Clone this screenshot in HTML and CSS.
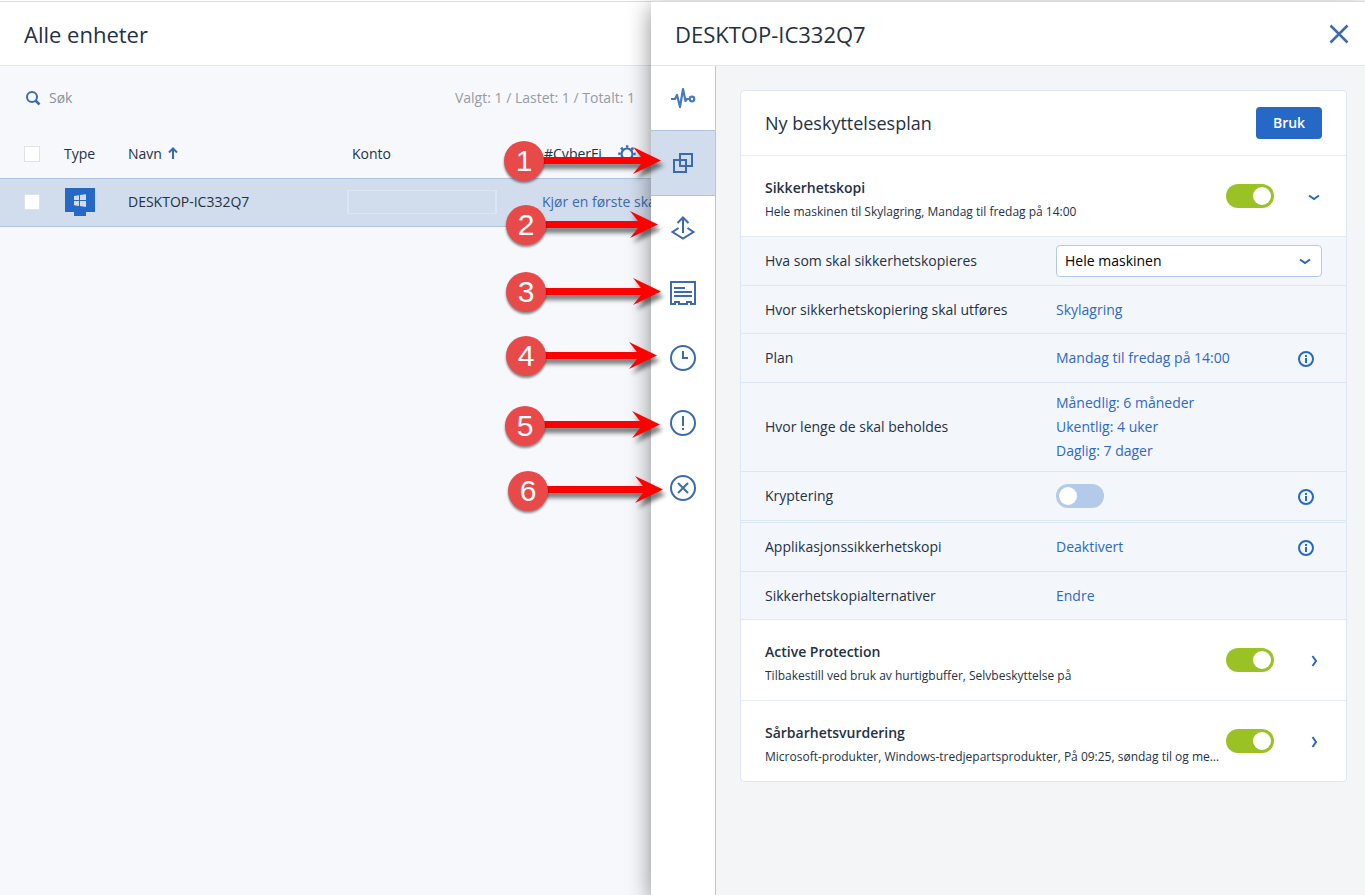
FILE: index.html
```html
<!DOCTYPE html>
<html lang="nb">
<head>
    <meta charset="UTF-8">
    <meta name="viewport" content="width=device-width, initial-scale=1.0">
    <title>Alle enheter</title>
    <link rel="stylesheet" href="styles.css">
</head>
<body>
    <div class="page">
        <main class="devices">
            <header class="page-header">
                <h1>Alle enheter</h1>
            </header>

            <div class="toolbar">
                <label class="search">
                    <svg width="16" height="16" viewBox="0 0 16 16" fill="none" stroke="#3c6aaf" stroke-width="2">
                        <circle cx="7" cy="7" r="5"/>
                        <path d="M10.500 10.500L14.500 14.500" stroke-width="2.500"/>
                    </svg>
                    <input type="text" placeholder="Søk" aria-label="Søk">
                </label>
                <span class="counts">Valgt: 1 / Lastet: 1 / Totalt: 1</span>
            </div>

            <table class="device-table">
                <thead>
                    <tr>
                        <th class="col-check"><input type="checkbox" class="check" aria-label="Velg alle"></th>
                        <th class="col-type">Type</th>
                        <th class="col-name">Navn
                            <svg class="sort" width="10" height="12" viewBox="0 0 10 12" fill="none" stroke="#3c6aaf" stroke-width="2">
                                <path d="M5 12V2M1 5.500L5 1.500L9 5.500"/>
                            </svg>
                        </th>
                        <th class="col-account">Konto</th>
                        <th>
                            <div class="last-head">
                                <span>#CyberFi</span>
                                <button class="icon-button" aria-label="Kolonner">
                                    <svg width="18" height="18" viewBox="0 0 18 18" fill="none" stroke="#3c6aaf">
                                        <circle cx="9" cy="9" r="5.500" stroke-width="2.200"/>
                                        <circle cx="9" cy="9" r="7.500" stroke-width="2.400" stroke-dasharray="2.600 3.290" stroke-dashoffset="1.300" transform="rotate(-90 9 9)"/>
                                    </svg>
                                </button>
                            </div>
                        </th>
                    </tr>
                </thead>
                <tbody>
                    <tr>
                        <td class="col-check"><input type="checkbox" class="check" aria-label="Velg DESKTOP-IC332Q7"></td>
                        <td>
                            <svg class="monitor" width="32" height="28" viewBox="0 0 32 28">
                                <path d="M1 0H31V24H22V28H10V24H1Z" fill="#2668c5"/>
                                <path d="M10 8L15 7.300V12H10ZM16 7.100L22 6.200V12H16ZM10 13H15V17.900L10 17.200ZM16 13H22V19L16 18.100Z" fill="#d1dcec"/>
                            </svg>
                        </td>
                        <td>DESKTOP-IC332Q7</td>
                        <td class="account-cell"><div class="account"></div></td>
                        <td><a href="#">Kjør en første skanning</a></td>
                    </tr>
                </tbody>
            </table>
        </main>

        <aside class="panel">
            <header class="page-header">
                <h2>DESKTOP-IC332Q7</h2>
                <button class="icon-button" aria-label="Lukk">
                    <svg width="20" height="20" viewBox="0 0 20 20" fill="none" stroke="#3c6aaf" stroke-width="2.500">
                        <path d="M1.500 1.500L18.500 18.500M18.500 1.500L1.500 18.500"/>
                    </svg>
                </button>
            </header>

            <div class="panel-body">
                <nav class="rail">
                    <button class="rail-item" aria-label="Status">
                        <svg width="26" height="26" viewBox="0 0 26 26" fill="none" stroke="#4678bd" stroke-width="2.200" stroke-linejoin="round">
                            <path d="M1 14H5L7 10L10 22L13 4L15.500 16L17 14H20"/>
                            <circle cx="22" cy="14" r="2.300"/>
                        </svg>
                    </button>
                    <button class="rail-item active" aria-label="Beskyttelse">
                        <svg width="26" height="26" viewBox="0 0 26 26" fill="none" stroke="#3c6aaf" stroke-width="2">
                            <path d="M10 4H22V16H10ZM4 10H16V22H4Z"/>
                        </svg>
                    </button>
                    <button class="rail-item" aria-label="Gjenoppretting">
                        <svg width="26" height="26" viewBox="0 0 26 26" fill="none" stroke="#3c6aaf" stroke-width="2">
                            <path d="M13 18V2.500M7.500 8L13 2.500L18.500 8M8.500 13L2.500 17L13 23.500L23.500 17L17.500 13"/>
                        </svg>
                    </button>
                    <button class="rail-item" aria-label="Detaljer">
                        <svg width="26" height="26" viewBox="0 0 26 26" fill="none" stroke="#3c6aaf" stroke-width="2">
                            <path d="M1 2H25V24H21V22H17V24H9V22H5V24H1ZM4 8H15M4 12H22M4 16H22"/>
                        </svg>
                    </button>
                    <button class="rail-item" aria-label="Aktiviteter">
                        <svg width="26" height="26" viewBox="0 0 26 26" fill="none" stroke="#3c6aaf" stroke-width="2">
                            <circle cx="13" cy="13" r="12"/>
                            <path d="M13 6V13H18"/>
                        </svg>
                    </button>
                    <button class="rail-item" aria-label="Varsler">
                        <svg width="26" height="26" viewBox="0 0 26 26" fill="none" stroke="#3c6aaf" stroke-width="2">
                            <circle cx="13" cy="13" r="12"/>
                            <path d="M13 6V16M13 18V20"/>
                        </svg>
                    </button>
                    <button class="rail-item" aria-label="Slett">
                        <svg width="26" height="26" viewBox="0 0 26 26" fill="none" stroke="#3c6aaf" stroke-width="2">
                            <circle cx="13" cy="13" r="12"/>
                            <path d="M8 8L18 18M18 8L8 18"/>
                        </svg>
                    </button>
                </nav>

                <div class="content">
                    <section class="card">
                        <div class="card-header">
                            <h3>Ny beskyttelsesplan</h3>
                            <button class="apply">Bruk</button>
                        </div>

                        <div class="module">
                            <div class="module-text">
                                <h4>Sikkerhetskopi</h4>
                                <p>Hele maskinen til Skylagring, Mandag til fredag på 14:00</p>
                            </div>
                            <input type="checkbox" class="toggle" aria-label="Sikkerhetskopi" checked>
                            <button class="icon-button expand" aria-label="Skjul">
                                <svg width="16" height="16" viewBox="0 0 16 16" fill="none" stroke="#2668c5" stroke-width="2">
                                    <path d="M3 7.500L8 11L13 7.500"/>
                                </svg>
                            </button>
                        </div>

                        <div class="settings">
                            <div class="row tall">
                                <label for="what">Hva som skal sikkerhetskopieres</label>
                                <div class="select">
                                    <select id="what">
                                        <option>Hele maskinen</option>
                                    </select>
                                    <svg width="16" height="16" viewBox="0 0 16 16" fill="none" stroke="#2668c5" stroke-width="2">
                                        <path d="M3 6.500L8 10L13 6.500"/>
                                    </svg>
                                </div>
                            </div>
                            <div class="row">
                                <span>Hvor sikkerhetskopiering skal utføres</span>
                                <div class="value"><a href="#">Skylagring</a></div>
                            </div>
                            <div class="row tall">
                                <span>Plan</span>
                                <div class="value">
                                    <a href="#">Mandag til fredag på 14:00</a>
                                    <button class="icon-button info" aria-label="Informasjon om plan">
                                        <svg width="16" height="16" viewBox="0 0 16 16" fill="none" stroke="#2668c5" stroke-width="2">
                                            <circle cx="8" cy="8" r="7"/>
                                            <path d="M8 4V6M8 7V12"/>
                                        </svg>
                                    </button>
                                </div>
                            </div>
                            <div class="row">
                                <span>Hvor lenge de skal beholdes</span>
                                <div class="value">
                                    <a href="#">Månedlig: 6 måneder<br>Ukentlig: 4 uker<br>Daglig: 7 dager</a>
                                </div>
                            </div>
                            <div class="row tall">
                                <label for="encryption">Kryptering</label>
                                <div class="value">
                                    <input type="checkbox" class="toggle" id="encryption">
                                    <button class="icon-button info" aria-label="Informasjon om kryptering">
                                        <svg width="16" height="16" viewBox="0 0 16 16" fill="none" stroke="#2668c5" stroke-width="2">
                                            <circle cx="8" cy="8" r="7"/>
                                            <path d="M8 4V6M8 7V12"/>
                                        </svg>
                                    </button>
                                </div>
                            </div>
                            <div class="row tall group-start">
                                <span>Applikasjonssikkerhetskopi</span>
                                <div class="value">
                                    <a href="#">Deaktivert</a>
                                    <button class="icon-button info" aria-label="Informasjon om applikasjonssikkerhetskopi">
                                        <svg width="16" height="16" viewBox="0 0 16 16" fill="none" stroke="#2668c5" stroke-width="2">
                                            <circle cx="8" cy="8" r="7"/>
                                            <path d="M8 4V6M8 7V12"/>
                                        </svg>
                                    </button>
                                </div>
                            </div>
                            <div class="row">
                                <span>Sikkerhetskopialternativer</span>
                                <div class="value"><a href="#">Endre</a></div>
                            </div>
                        </div>

                        <div class="module">
                            <div class="module-text">
                                <h4>Active Protection</h4>
                                <p>Tilbakestill ved bruk av hurtigbuffer, Selvbeskyttelse på</p>
                            </div>
                            <input type="checkbox" class="toggle" aria-label="Active Protection" checked>
                            <button class="icon-button expand" aria-label="Vis">
                                <svg width="16" height="16" viewBox="0 0 16 16" fill="none" stroke="#2668c5" stroke-width="2">
                                    <path d="M6.500 4L10 9L6.500 14"/>
                                </svg>
                            </button>
                        </div>

                        <div class="module">
                            <div class="module-text">
                                <h4>Sårbarhetsvurdering</h4>
                                <p>Microsoft-produkter, Windows-tredjepartsprodukter, På 09:25, søndag til og med lørdag</p>
                            </div>
                            <input type="checkbox" class="toggle" aria-label="Sårbarhetsvurdering" checked>
                            <button class="icon-button expand" aria-label="Vis">
                                <svg width="16" height="16" viewBox="0 0 16 16" fill="none" stroke="#2668c5" stroke-width="2">
                                    <path d="M6.500 4L10 9L6.500 14"/>
                                </svg>
                            </button>
                        </div>
                    </section>
                </div>
            </div>

            <!-- numbered arrows pointing at the rail icons -->
            <svg class="callouts" width="180" height="400" viewBox="0 0 180 400">
                <g class="arrows">
                    <path d="M24 28H141L133 18L161 31.500L133 45L141 35H24Z"/>
                    <path d="M26 92H138L130 82L158 95.500L130 109L138 99H26Z"/>
                    <path d="M26 159H141L133 149L161 162.500L133 176L141 166H26Z"/>
                    <path d="M26 223H137L129 213L157 226.500L129 240L137 230H26Z"/>
                    <path d="M25 292H140L132 282L160 295.500L132 309L140 299H25Z"/>
                    <path d="M28 357H143L135 347L163 360.500L135 374L143 364H28Z"/>
                </g>
                <g class="badges">
                    <circle cx="24" cy="32" r="20"/>
                    <circle cx="26" cy="96" r="20"/>
                    <circle cx="26" cy="163" r="20"/>
                    <circle cx="26" cy="227" r="20"/>
                    <circle cx="25" cy="297" r="20"/>
                    <circle cx="28" cy="362" r="20"/>
                </g>
                <g class="numbers">
                    <text x="24" y="42">1</text>
                    <text x="26" y="106">2</text>
                    <text x="26" y="173">3</text>
                    <text x="26" y="237">4</text>
                    <text x="25" y="307">5</text>
                    <text x="28" y="372">6</text>
                </g>
            </svg>
        </aside>
    </div>
</body>
</html>
```
FILE: styles.css
```css
* {
    box-sizing: border-box;
}

body {
    margin: 0;
    font-family: "Open Sans", "Noto Sans", sans-serif;
    font-size: 14px;
    line-height: 24px;
    color: #243143;
    background-color: #f6f8fc;
}

h1, h2, h3, h4, p {
    margin: 0;
    font-weight: 400;
}

a {
    color: #2f68c0;
    text-decoration: none;
}

button, input, select {
    font: inherit;
}

svg {
    display: block;
    flex: none;
}

.page {
    display: grid;
    grid-template-columns: 651fr 714fr;
    min-height: 100vh;
    padding-top: 1px;
    background-color: #fff;
    overflow: hidden;
}

.page-header {
    display: flex;
    align-items: center;
    justify-content: space-between;
    height: 65px;
    padding: 0 16px 0 24px;
    background-color: #fff;
    border-top: 1px solid #d9dbdf;
    border-bottom: 1px solid #e0e5f0;
}

.page-header h1, .page-header h2 {
    font-size: 22px;
    line-height: 32px;
}

.icon-button {
    display: flex;
    align-items: center;
    justify-content: center;
    padding: 0;
    border: none;
    background: none;
    cursor: pointer;
}

/* Device list */
.devices {
    min-width: 0;
    background-color: #f6f8fc;
}

.toolbar {
    display: flex;
    align-items: center;
    justify-content: space-between;
    height: 64px;
    padding: 0 16px 0 25px;
}

.search {
    display: flex;
    align-items: center;
    gap: 8px;
}

.search input {
    width: 200px;
    padding: 0;
    border: none;
    outline: none;
    background: none;
}

.search input::placeholder {
    color: #8b9096;
}

.counts {
    color: #959ba3;
}

.device-table {
    width: 100%;
    table-layout: fixed;
    border-spacing: 0;
}

.device-table th {
    height: 48px;
    padding: 0;
    text-align: left;
    font-weight: 500;
}

.device-table td {
    height: 49px;
    padding: 0 0 1px;
    background-color: #d1dcec;
    border-top: 1px solid #afc3e1;
    border-bottom: 1px solid #afc3e1;
    white-space: nowrap;
    overflow: hidden;
}

.device-table td a {
    color: #3c6aaf;
}

.device-table .col-check {
    width: 64px;
    padding-left: 24px;
}

.col-type {
    width: 64px;
}

.col-name {
    width: 224px;
}

.col-account {
    width: 190px;
}

.sort {
    display: inline-block;
    margin-left: 2px;
}

.check {
    display: block;
    appearance: none;
    width: 16px;
    height: 16px;
    margin: 0;
    border: 1px solid #dfe3e8;
    background-color: #fff;
}

.last-head {
    display: flex;
    align-items: center;
    justify-content: space-between;
    padding: 0 15px 0 2px;
}

.device-table .account-cell {
    overflow: visible;
}

.account {
    width: 150px;
    height: 24px;
    margin-left: -5px;
    border: 1px solid #dbe6f4;
    border-width: 1px 2px;
}

/* Device panel */
.panel {
    display: flex;
    flex-direction: column;
    position: relative;
    min-width: 0;
    background-color: #fff;
    box-shadow: 0 6px 22px rgba(0, 0, 0, 0.45);
}

.panel-body {
    display: flex;
    flex: 1;
}

.rail {
    flex: none;
    width: 65px;
    border-right: 1px solid #b3c6e2;
}

.rail-item {
    display: flex;
    align-items: center;
    justify-content: center;
    width: 100%;
    height: 65px;
    padding: 0;
    border: none;
    border-bottom: 1px solid transparent;
    background: none;
    cursor: pointer;
}

.rail-item:first-child {
    border-bottom-color: #afc3e1;
}

.rail-item.active {
    background-color: #d1dcec;
    border-bottom-color: #afc3e1;
}

.content {
    flex: 1;
    min-width: 0;
    padding: 24px 18px 24px 24px;
    background-color: #f4f5f7;
}

.card {
    background-color: #fff;
    border: 1px solid #dde7f4;
    border-radius: 4px;
    overflow: hidden;
}

.card-header {
    display: flex;
    align-items: center;
    justify-content: space-between;
    height: 65px;
    padding: 0 24px;
    border-bottom: 1px solid #e4ecf7;
}

.card-header h3 {
    font-size: 18px;
}

.apply {
    width: 66px;
    height: 32px;
    padding: 0;
    border: none;
    border-radius: 4px;
    background-color: #2668c5;
    color: #fff;
    font-weight: 600;
    cursor: pointer;
}

.module {
    display: flex;
    align-items: center;
    height: 81px;
    padding: 0 24px;
    border-bottom: 1px solid #e4ecf7;
}

.module:last-child {
    height: 80px;
    border-bottom: none;
}

.module-text {
    flex: 1;
    min-width: 0;
    padding: 8px 6px 0 0;
}

.module-text h4 {
    font-size: 14px;
    font-weight: 600;
}

.module-text p {
    font-size: 12px;
    white-space: nowrap;
    overflow: hidden;
    text-overflow: ellipsis;
}

.expand {
    width: 16px;
    height: 24px;
    margin-left: 32px;
}

.toggle {
    flex: none;
    appearance: none;
    position: relative;
    width: 48px;
    height: 24px;
    margin: 0;
    border-radius: 12px;
    background-color: #b4caeb;
    cursor: pointer;
}

.toggle::before {
    content: "";
    position: absolute;
    top: 3px;
    left: 3px;
    width: 18px;
    height: 18px;
    border-radius: 50%;
    background-color: #fff;
}

.toggle:checked {
    background-color: #9bc225;
}

.toggle:checked::before {
    left: 27px;
}

.settings {
    background-color: #f3f7fc;
}

.row {
    display: grid;
    grid-template-columns: 291fr 266fr;
    align-items: center;
    min-height: 48px;
    padding: 8px 24px;
    border-bottom: 1px solid #dde7f4;
}

.row.tall {
    min-height: 49px;
}

.row.group-start {
    min-height: 50px;
    margin-top: 1px;
    border-top: 1px solid #dde7f4;
}

.value {
    display: flex;
    align-items: center;
    justify-content: space-between;
}

.info {
    margin: 2px 8px 0 0;
}

.select {
    position: relative;
}

.select select {
    display: block;
    appearance: none;
    width: 100%;
    height: 32px;
    padding: 0 32px 0 8px;
    border: 1px solid #b0c8ea;
    border-radius: 4px;
    background-color: #fff;
    color: #000;
}

.select svg {
    position: absolute;
    top: 8px;
    right: 9px;
    pointer-events: none;
}

/* Numbered arrows */
.callouts {
    position: absolute;
    top: 128px;
    left: -151px;
    pointer-events: none;
}

.arrows {
    fill: #f00;
    filter: drop-shadow(3px 5px 2px rgba(0, 0, 0, 0.5));
}

.badges {
    fill: #e84a4a;
    filter: drop-shadow(0 2px 1px rgba(0, 0, 0, 0.45));
}

.numbers {
    fill: #fff;
    font-family: "Liberation Sans", Arial, sans-serif;
    font-size: 30px;
    text-anchor: middle;
}
```
